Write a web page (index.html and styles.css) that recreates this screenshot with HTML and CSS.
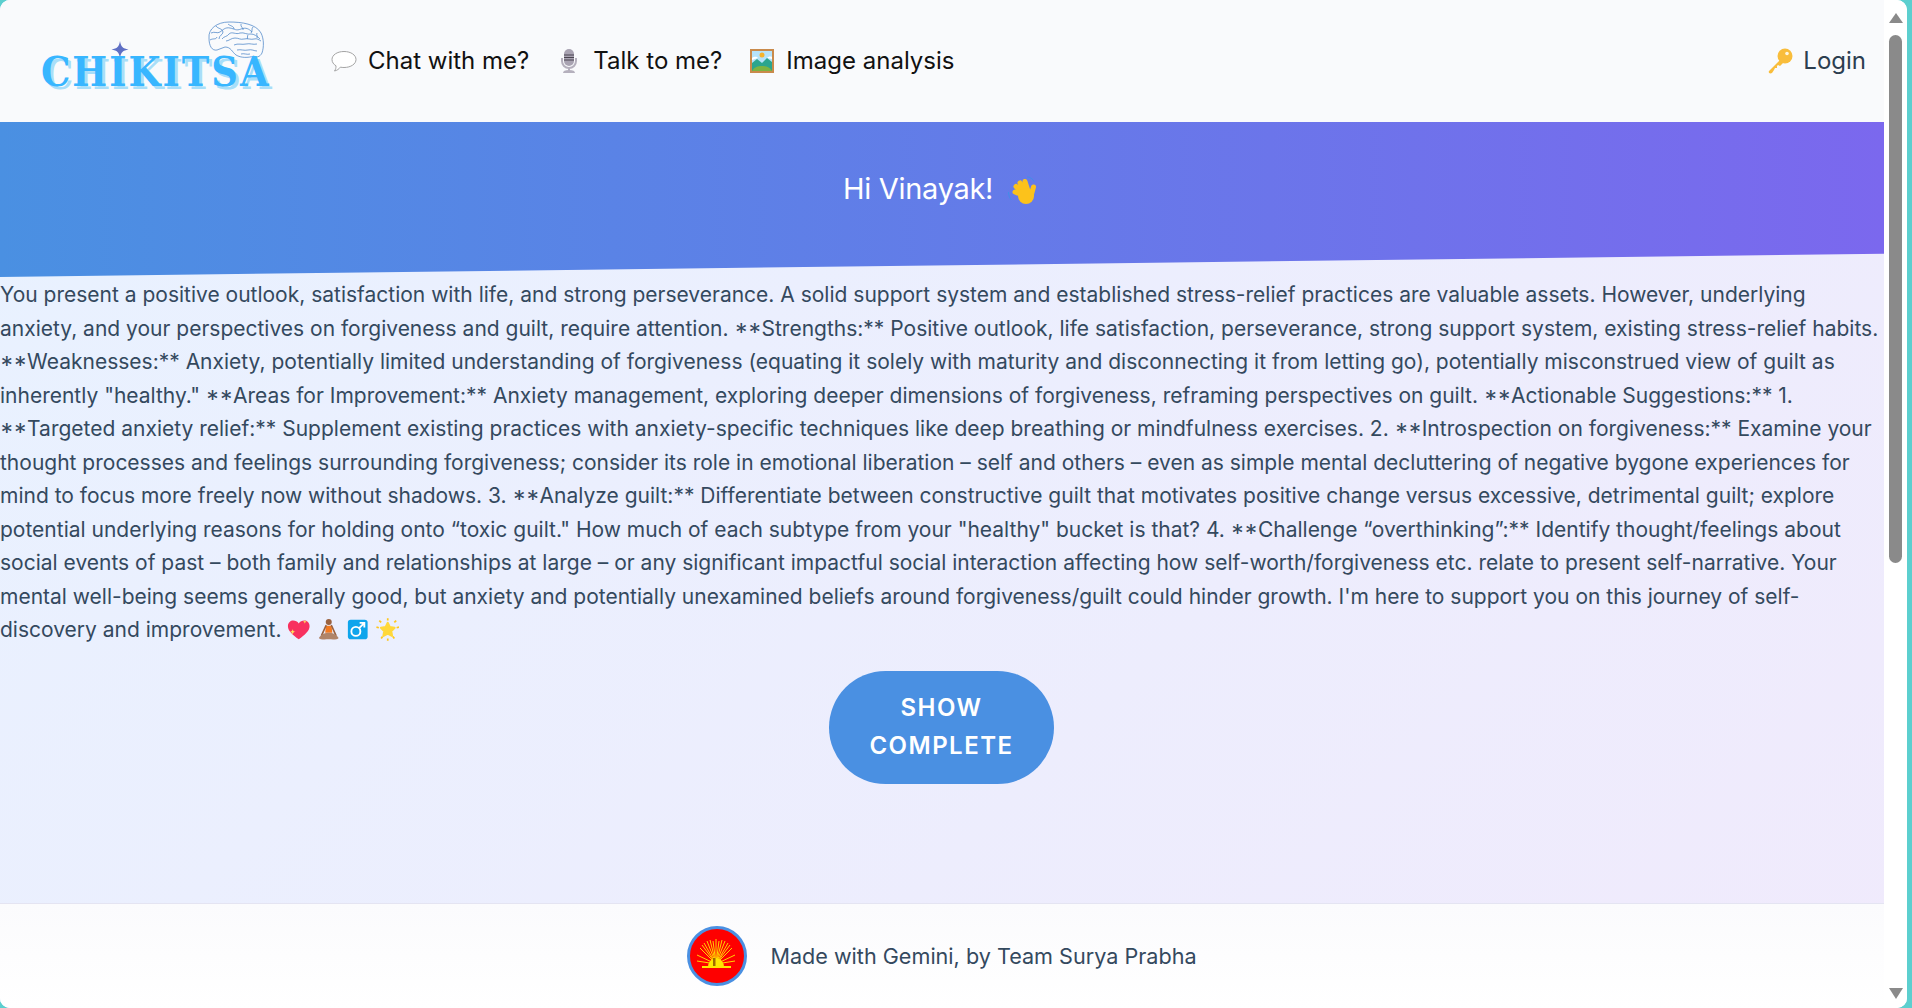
FILE: index.html
```html
<!DOCTYPE html>
<html lang="en">
<head>
<meta charset="utf-8">
<title>Chikitsa</title>
<link rel="stylesheet" href="styles.css">
</head>
<body>
<div class="frame">
  <div class="page">
    <header class="header">
      <a class="logo">
        <svg class="brain" viewBox="0 0 56 38" fill="none" stroke="#3f7cc4" stroke-width=".7">
          <path d="M1 17C0 8 9 1 21 1c13 0 27 2 32 11 3 6 3 14 1 20-2 4-6 5-8 3-6 2-13 2-18-1-4-3-5-8-11-8-3 1-5 2-8 3-5 1-8-4-8-12z"/>
          <path d="M3 12c4-2 6 1 9-1s5-5 10-4 6 3 11 1 8 0 11 3M8 5c2 3 6 2 7 6 0 3-4 3-4 7M2 19c3-2 6 0 7-3M14 18c2-3 5-2 7-5 3-3 7 1 11-1 4-1 7 2 11 1 3 0 6 2 9 5M20 3c2 2 6 2 6 5M33 3c-1 3 3 4 2 6M45 6c-2 2 0 4-2 6M18 20c3 0 5-3 9-3s5 2 9 1 7 1 10 0 5 1 7 2M26 24c4-2 8 0 12-1s7 1 11 0M29 29c4-1 7 1 11 0s6 1 9 1M33 33c3-1 6 1 9 0M49 12c-1 2 1 3 0 5M40 14c-1 1 0 3-1 4"/>
        </svg>
        <svg class="spark" viewBox="0 0 18 18"><path d="M9 0c1 6 3 8 9 9-6 1-8 3-9 9-1-6-3-8-9-9 6-1 8-3 9-9z" fill="#5f6fc4"/></svg>
        <span class="logo-text">CHIKITSA</span>
      </a>
      <nav class="nav">
        <a class="link">
          <svg class="icon" viewBox="0 0 28 28" fill="#fff" stroke="#a4a4a4" stroke-width="1"><path d="M14 4.500c7 0 12 3.600 12 8s-5 8-12 8c-1.300 0-2.500-.1-3.600-.4C9 22 7 23.500 4.500 24c1.100-1.500 1.600-3 1.500-5.200-2.500-1.500-4-3.700-4-6.300 0-4.400 5-8 12-8z"/></svg>
          Chat with me?
        </a>
        <a class="link">
          <svg class="icon" viewBox="0 0 28 28"><path d="M7 11v3c0 4 3 7 7 7s7-3 7-7v-3" fill="none" stroke="#b5b0bd" stroke-width="2"/><rect x="9" y="2" width="10" height="17" rx="5" fill="#a9a3b2"/><path d="M9 8h10M9 10.500h10M9 13h10" stroke="#4a4550" stroke-width="1.200"/><rect x="13" y="21" width="2" height="3" fill="#b5b0bd"/><path d="M8 26c0-2 2-3 6-3s6 1 6 3z" fill="#b5b0bd"/></svg>
          Talk to me?
        </a>
        <a class="link">
          <svg class="icon" viewBox="0 0 28 28"><rect x="2" y="2" width="24" height="24" fill="#c98a4b"/><rect x="4" y="4" width="20" height="20" fill="#b6e3fa"/><circle cx="14" cy="8" r="2.500" fill="#f7b32b"/><path d="M4 11c3-2 5-1 6 0l-6 2zM24 10c-2-1-4 0-5 1l5 1z" fill="#fff"/><path d="M4 16l5-4 5 4 5-5 5 4v9H4z" fill="#2ba58e"/><path d="M4 24c2-4 6-5 10-5s8 1 10 5z" fill="#7cb342"/></svg>
          Image analysis
        </a>
      </nav>
      <a class="link login">
        <svg class="icon" viewBox="0 0 28 28"><path d="M3 24l11-11 3 3-3 3-2-1-1 1 0 2-2 0-1 2-2 3c-2 1-4 0-3-2z" fill="#f9bd3b"/><circle cx="19" cy="9" r="7.500" fill="#f9bd3b"/><circle cx="21" cy="6.500" r="1.800" fill="#fff6dd"/></svg>
        Login
      </a>
    </header>
    <section class="hero">
      <h1 class="hero-title">Hi Vinayak!
        <svg class="wave" viewBox="0 0 30 30">
          <g stroke="#fcc21b" stroke-width="5" stroke-linecap="round"><path d="M18 21L8 17M18 19L9 11.500M19 18L13 8M21 16L18 6.500M24 21L26.500 12"/></g>
          <circle cx="19" cy="21" r="8" fill="#fcc21b"/>
          <path d="M20 2c3 0 6 2 7 4.500M1.500 17c0 3 1 6 3 8" fill="none" stroke="#3f8fe8" stroke-width="1"/>
        </svg>
      </h1>
    </section>
    <main class="main">
      <p class="report">You present a positive outlook, satisfaction with life, and strong perseverance. A solid support system and established stress-relief practices are valuable assets. However, underlying anxiety, and your perspectives on forgiveness and guilt, require attention. <span class="ast">**</span>Strengths:** Positive outlook, life satisfaction, perseverance, strong support system, existing stress-relief habits. <span class="ast">**</span>Weaknesses:** Anxiety, potentially limited understanding of forgiveness (equating it solely with maturity and disconnecting it from letting go), potentially misconstrued view of guilt as inherently "healthy." <span class="ast">**</span>Areas for Improvement:** Anxiety management, exploring deeper dimensions of forgiveness, reframing perspectives on guilt. <span class="ast">**</span>Actionable Suggestions:** 1. <span class="ast">**</span>Targeted anxiety relief:** Supplement existing practices with anxiety-specific techniques like deep breathing or mindfulness exercises. 2. <span class="ast">**</span>Introspection on forgiveness:** Examine your thought processes and feelings surrounding forgiveness; consider its role in emotional liberation – self and others – even as simple mental decluttering of negative bygone experiences for mind to focus more freely now without shadows. 3. <span class="ast">**</span>Analyze guilt:** Differentiate between constructive guilt that motivates positive change versus excessive, detrimental guilt; explore potential underlying reasons for holding onto “toxic guilt." How much of each subtype from your "healthy" bucket is that? 4. <span class="ast">**</span>Challenge “overthinking”:** Identify thought/feelings about social events of past – both family and relationships at large – or any significant impactful social interaction affecting how self-worth/forgiveness etc. relate to present self-narrative. Your mental well-being seems generally good, but anxiety and potentially unexamined beliefs around forgiveness/guilt could hinder growth. I'm here to support you on this journey of self-discovery and improvement.
        <svg class="emoji" viewBox="0 0 25 25"><path d="M12.500 23C6 18 1 14 1 9c0-4 3-6 5.500-6 2.500 0 4.500 1 6 3 1.500-2 3.500-3 6-3C21 3 24 5 24 9c0 5-5 9-11.500 14z" fill="#f8315f"/><path d="M6 12c.4 2 1 2.600 3 3-2 .4-2.600 1-3 3-.4-2-1-2.600-3-3 2-.4 2.600-1 3-3zM19 2c.3 1.500.7 1.900 2 2.200-1.300.3-1.700.7-2 2.200-.3-1.500-.7-1.900-2-2.200 1.300-.3 1.700-.7 2-2.200z" fill="#ffe25a"/></svg>
        <svg class="emoji" viewBox="0 0 25 25"><circle cx="12.500" cy="4.500" r="3.200" fill="#9a6240"/><path d="M9.500 8.500h6l.8 7.500H8.700z" fill="#f4791f"/><path d="M9.500 8.500L5 18.500M15.500 8.500L20 18.500" stroke="#9a6240" stroke-width="1.800" stroke-linecap="round"/><path d="M2 21.500c3-4.500 7-5.500 10.500-5.500s7.500 1 10.500 5.500c-1 2-6 1.500-10.500 1.500S3 23.500 2 21.500z" fill="#b08468"/></svg>
        <svg class="emoji" viewBox="0 0 25 25"><rect x="2" y="2" width="21" height="21" rx="3" fill="#0ea5ec"/><circle cx="10.500" cy="14.500" r="4.800" fill="none" stroke="#fff" stroke-width="2"/><path d="M14 11l5-5M14.500 5.500h5v5" fill="none" stroke="#fff" stroke-width="2"/></svg>
        <svg class="emoji" viewBox="0 0 25 25"><path d="M12.500 5.500l2.200 4.500 5 .7-3.600 3.500.9 5-4.500-2.400-4.500 2.400.9-5-3.600-3.500 5-.7z" fill="#ffd83b" stroke="#ffd83b" stroke-width="2.400" stroke-linejoin="round"/><path d="M12.500 .5v2.500M12.500 22v2.500M.5 10l2.500.7M22 10.700l2.500-.7M3.500 3l2 2M21.500 3l-2 2M5.500 22l1.500-2M19.500 22L18 20" stroke="#ffc61a" stroke-width="1.800"/></svg>
      </p>
      <button class="show-btn" type="button">SHOW COMPLETE</button>
    </main>
    <footer class="footer">
      <svg class="sun" viewBox="0 0 60 60">
        <circle cx="30" cy="30" r="28.500" fill="#fe0000" stroke="#4a90e2" stroke-width="3"/>
        <g stroke="#ffd400" stroke-width="1">
          <path d="M29 38L29 13M29 38L23 14M29 38L35 14M29 38L17 17M29 38L41 17M29 38L13 22M29 38L45 22M29 38L10 29M29 38L48 29M29 38L10 35M29 38L48 35M29 38L26 15M29 38L32 15M29 38L20 15M29 38L38 15M29 38L15 19M29 38L43 19"/>
        </g>
        <path d="M21 41a8 9 0 0 1 16 0z" fill="#ffe600"/>
        <rect x="15" y="40" width="29" height="2" fill="#ffe600"/>
        <path d="M26 40v-8h2.500v8z" fill="#a06a00"/>
      </svg>
      <span class="footer-text">Made with Gemini, by Team Surya Prabha</span>
    </footer>
  </div>
  <div class="scrollbar">
    <span class="arrow arrow-up"></span>
    <span class="thumb-track"><span class="thumb"></span></span>
    <span class="arrow arrow-down"></span>
  </div>
</div>
</body>
</html>
```
FILE: styles.css
```css
* { box-sizing: border-box; }
html, body { margin: 0; height: 100%; overflow: hidden; }
body { background: #5ccfcf; font-family: Inter, "Liberation Sans", sans-serif; }
.frame { width: 1907px; height: 1008px; display: flex; background: #fff; border-radius: 10px; overflow: hidden; }
.page { flex: 1; min-width: 0; display: flex; flex-direction: column; background: linear-gradient(135deg, #e8f2ff 0%, #f0eafc 100%); }

.header { height: 122px; flex: none; display: flex; align-items: center; background: #f9fafc; padding: 0 18px 0 41px; color: #111; }
.logo { position: relative; width: 289px; height: 122px; flex: none; display: block; }
.logo-text { position: absolute; left: 0; top: 48px; font: 700 41px/48px "DejaVu Serif Condensed", "DejaVu Serif", serif; letter-spacing: 2px; color: #38b6ff; text-shadow: 3px 3px 0 #a8def9; white-space: nowrap; }
.brain { position: absolute; left: 167px; top: 21px; width: 56px; height: 38px; }
.spark { position: absolute; left: 70px; top: 41px; width: 18px; height: 17px; }
.nav { display: flex; gap: 26px; flex: 1; }
.link { display: inline-flex; align-items: center; gap: 10px; font-size: 24px; line-height: 32px; white-space: nowrap; }
.icon { width: 28px; height: 28px; flex: none; }
.login { color: #2c3e50; gap: 9px; }

.hero { height: 155px; flex: none; padding-top: 47px; background: linear-gradient(90deg, #4a90e2, #7b68ee); clip-path: polygon(0 0, 100% 0, 100% 85%, 0 100%); text-align: center; }
.hero-title { margin: 0; font-size: 29px; font-weight: 400; line-height: 40px; letter-spacing: -.3px; color: #fff; }
.wave { width: 30px; height: 30px; margin: 0 4px 0 6px; vertical-align: -6px; }

.main { flex: 1; min-height: 0; display: flex; flex-direction: column; align-items: center; }
.report { margin: 1px 0 24px; width: 100%; font-size: 21px; line-height: 33.500px; color: #34495e; }
.ast { font-feature-settings: "case"; }
.emoji { width: 23.500px; height: 25px; vertical-align: -5px; }
.show-btn { width: 225px; height: 113px; margin-right: 1px; padding: 0 30px; border: 0; border-radius: 57px; background: #4a90e2; color: #fff; font: 600 24px/38px Inter, sans-serif; letter-spacing: 1.500px; }

.footer { height: 105px; flex: none; display: flex; align-items: center; justify-content: center; gap: 23px; background: linear-gradient(180deg, #fbfbfd, #fff); border-top: 1px solid #e4e4f2; }
.sun { width: 60px; height: 60px; flex: none; }
.footer-text { font-size: 21.600px; color: #34495e; }

.scrollbar { width: 23px; flex: none; display: flex; flex-direction: column; align-items: center; background: #fff; padding: 13px 0 9px; }
.arrow { width: 0; height: 0; flex: none; border-left: 7.500px solid transparent; border-right: 7.500px solid transparent; }
.arrow-up { border-bottom: 10px solid #8a8a8a; }
.arrow-down { border-top: 11px solid #8a8a8a; }
.thumb-track { flex: 1; width: 100%; display: block; padding: 12px 5px; }
.thumb { display: block; width: 13px; height: 528px; border-radius: 7px; background: #8a8a8a; }
```
